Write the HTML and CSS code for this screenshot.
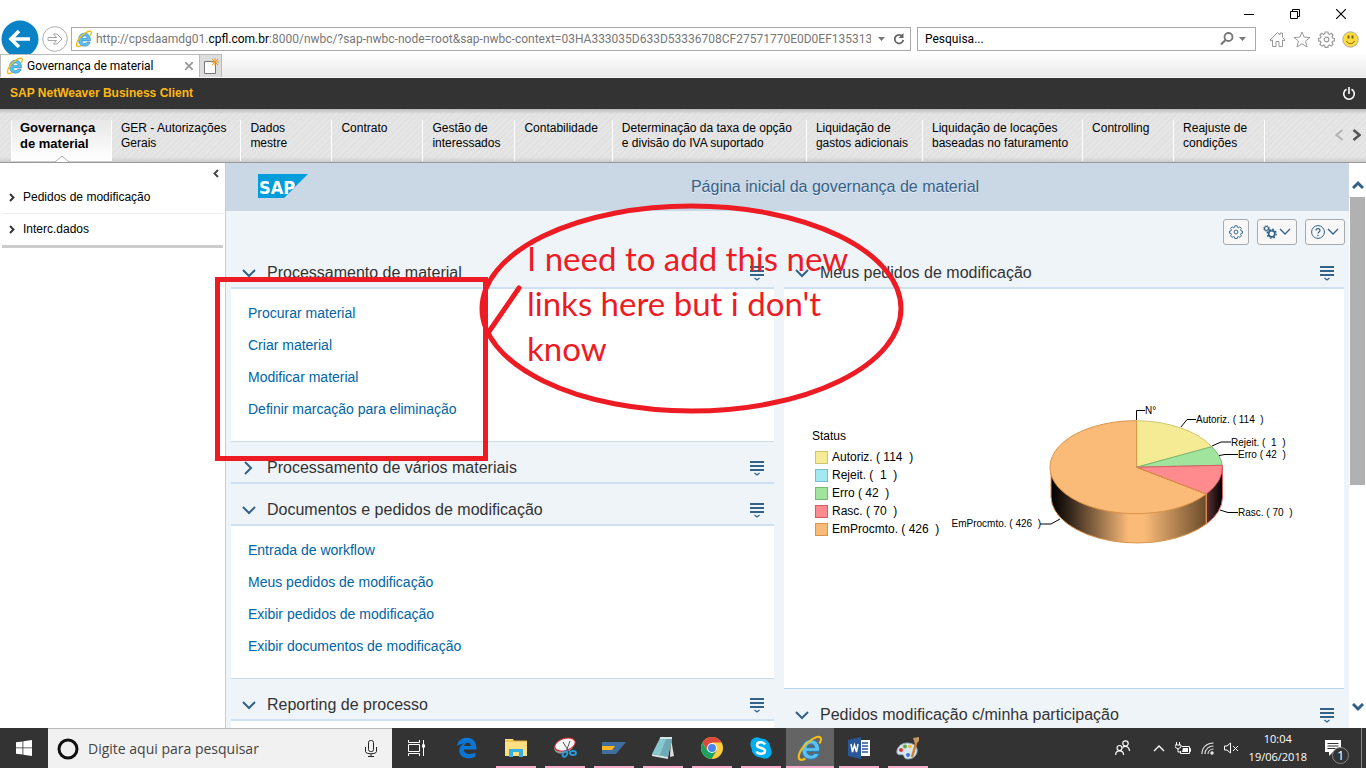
FILE: index.html
```html
<!DOCTYPE html>
<html lang="pt-BR">
<head>
<meta charset="utf-8">
<title>Governança de material</title>
<link rel="stylesheet" href="styles.css">
</head>
<body>
<svg class="defs" aria-hidden="true">
  <symbol id="ie" viewBox="0 0 24 24">
    <path d="M20.500 14.500H9.200c.3 2.300 1.700 3.500 3.700 3.500 1.500 0 2.500-.6 3-1.600h4.300c-1.100 3.300-3.800 5.100-7.400 5.100-5 0-8-3.300-8-8.500s3.200-8.700 8-8.700c5 0 8 3.500 7.700 10.200zM9.300 11.300h7c-.1-2-1.400-3.300-3.400-3.300s-3.300 1.300-3.600 3.300z" fill="#5bc2f0" stroke="#2379b5" stroke-width=".8"/>
    <path d="M20.500 7.500C23.500 2 21-.2 14.500 3.400 7.500 7.300 1.500 15.500 2 20.200c.3 2.500 3 2.400 6 .7" fill="none" stroke="#f4bd16" stroke-width="1.900"/>
  </symbol>
  <symbol id="menu" viewBox="0 0 14 15">
    <path d="M0 1h14M0 5h14M0 9h14" stroke="#346187" stroke-width="2"/>
    <path d="M4.500 12l2.500 2 2.500-2" fill="none" stroke="#346187" stroke-width="1.300"/>
  </symbol>
  <symbol id="down" viewBox="0 0 14 14"><path d="M1 4l6 6 6-6" fill="none" stroke="#346187" stroke-width="2"/></symbol>
  <symbol id="right" viewBox="0 0 14 14"><path d="M3 1l6 6-6 6" fill="none" stroke="#346187" stroke-width="2"/></symbol>
  <symbol id="thin-down" viewBox="0 0 12 8"><path d="M1 1l5 5 5-5" fill="none" stroke="#346187" stroke-width="1.300"/></symbol>
  <symbol id="item" viewBox="0 0 6 9"><path d="M1 1l3.500 3.500L1 8" fill="none" stroke="#333" stroke-width="1.900"/></symbol>
  <symbol id="gear" viewBox="0 0 18 18">
    <path d="M7.500 1h3l.4 2 1.400.6 1.700-1.200 2 2-1.200 1.700.6 1.400 2 .4v2.600l-2 .4-.6 1.400 1.200 1.700-2 2-1.700-1.200-1.400.6-.4 2h-3l-.4-2-1.400-.6L4 16l-2-2 1.200-1.700-.6-1.400-2-.4V7.900l2-.4.6-1.400L2 4.400l2-2 1.700 1.200L7.100 3z" fill="none" stroke="currentColor" stroke-width="1.200"/>
    <circle cx="9" cy="9" r="2.500" fill="none" stroke="currentColor" stroke-width="1.200"/>
  </symbol>
</svg>

<header class="chrome">
  <div class="window-controls">
    <button aria-label="Minimizar"><svg width="10" height="10"><path d="M0 5.500h10" stroke="#000"/></svg></button>
    <button aria-label="Restaurar"><svg width="10" height="10"><path d="M2.500 2.500V.5h7v7h-2M.5 2.500h7v7h-7z" fill="none" stroke="#000"/></svg></button>
    <button aria-label="Fechar"><svg width="10" height="10"><path d="M0 0l10 10M10 0L0 10" stroke="#000" stroke-width="1.200"/></svg></button>
  </div>
  <div class="address-row">
    <button class="back" aria-label="Voltar"><svg width="38" height="38" viewBox="0 0 38 38"><circle cx="19" cy="19" r="18.500" fill="#0983c5"/><path d="M29 19H12M18 11l-8 8 8 8" fill="none" stroke="#fff" stroke-width="3.600"/></svg></button>
    <button class="forward" aria-label="Avançar"><svg width="26" height="26" viewBox="0 0 26 26"><circle cx="13" cy="13" r="12.300" fill="none" stroke="#b0b0b0"/><path d="M6 11.500h8.500L11.500 8h3.500l5 5-5 5h-3.500l3-3.500H6z" fill="none" stroke="#a5a5a5"/></svg></button>
    <div class="field url">
      <svg width="18" height="18"><use href="#ie"/></svg>
      <div class="url-text" role="textbox" aria-label="Endereço">http://cpsdaamdg01.<b>cpfl.com.br</b>:8000/nwbc/?sap-nwbc-node=root&amp;sap-nwbc-context=03HA333035D633D53336708CF27571770E0D0EF135313036F1</div>
      <svg width="7" height="4"><path d="M0 0h7L3.500 4z" fill="#777"/></svg>
      <svg class="reload" width="12" height="12" viewBox="0 0 12 12"><path d="M9.500 3.500A4.300 4.300 0 1 0 10.300 7" fill="none" stroke="#666" stroke-width="1.800"/><path d="M10.500 0v5H5.500z" fill="#666"/></svg>
    </div>
    <div class="field search">
      <input type="text" value="Pesquisa..." aria-label="Pesquisa">
      <svg width="14" height="14" viewBox="0 0 14 14"><circle cx="8.500" cy="5" r="4" fill="none" stroke="#777" stroke-width="1.800"/><path d="M5.500 8L1 12.500" stroke="#777" stroke-width="2.200"/></svg>
      <svg width="7" height="4"><path d="M0 0h7L3.500 4z" fill="#777"/></svg>
    </div>
    <div class="tools">
      <svg width="17" height="17" viewBox="0 0 17 17"><path d="M1 9l7.500-7.500L11 4V2h2.500v4.500L16 9l-1 1-1.500-1v6.500h-3.500v-5H7v5H3.500V9L2 10z" fill="none" stroke="#999"/></svg>
      <svg width="18" height="17" viewBox="0 0 18 17"><path d="M9 1l2.200 5.200 5.800.3-4.500 3.600L14 16l-5-3.300L4 16l1.500-5.900L1 6.500l5.800-.3z" fill="none" stroke="#999"/></svg>
      <svg width="17" height="17" color="#999"><use href="#gear"/></svg>
      <svg width="17" height="17" viewBox="0 0 17 17"><circle cx="8.500" cy="8.500" r="7.700" fill="#ffdc3c" stroke="#aaa"/><path d="M6.500 4.500v3M10.500 4.500v3" stroke="#75621a" stroke-width="2"/><path d="M4.500 10c1.500 3.500 6.500 3.500 8 0" fill="none" stroke="#75621a"/></svg>
    </div>
  </div>
  <div class="tab-row">
    <div class="tab"><svg width="18" height="18"><use href="#ie"/></svg><span>Governança de material</span><button aria-label="Fechar guia"><svg width="8" height="8"><path d="M0 0l8 8M8 0L0 8" stroke="#999" stroke-width="1.800"/></svg></button></div>
    <button class="new-tab" aria-label="Nova guia"><svg width="16" height="17" viewBox="0 0 16 17"><path d="M1.500 3.500h11v12h-11z" fill="#fff" stroke="#777"/><path d="M12 0v8M8 4h8M9 1l6 6M15 1L9 7" stroke="#e89a20"/></svg></button>
  </div>
</header>

<div class="brand"><span>SAP NetWeaver Business Client</span>
  <button aria-label="Sair"><svg width="14" height="14" viewBox="0 0 14 14"><path d="M4.500 2.300a5.300 5.300 0 1 0 5 0M7 0v7" fill="none" stroke="#fff" stroke-width="1.600"/></svg></button>
</div>

<nav class="topnav">
  <a href="#" class="active">Governança<br>de material<svg class="pointer" width="14" height="7"><path d="M0 7l7-6 7 6" fill="#fff" stroke="#aaa"/></svg></a>
  <a href="#">GER - Autorizações<br>Gerais</a>
  <a href="#">Dados<br>mestre</a>
  <a href="#">Contrato</a>
  <a href="#">Gestão de<br>interessados</a>
  <a href="#">Contabilidade</a>
  <a href="#">Determinação da taxa de opção<br>e divisão do IVA suportado</a>
  <a href="#">Liquidação de<br>gastos adicionais</a>
  <a href="#">Liquidação de locações<br>baseadas no faturamento</a>
  <a href="#">Controlling</a>
  <a href="#">Reajuste de<br>condições</a>
  <div class="nav-arrows">
    <button aria-label="Anterior"><svg width="9" height="12"><path d="M7.500 1l-6 5 6 5" fill="none" stroke="#b5b5b5" stroke-width="2.200"/></svg></button>
    <button aria-label="Próximo"><svg width="9" height="12"><path d="M1.500 1l6 5-6 5" fill="none" stroke="#555" stroke-width="2.600"/></svg></button>
  </div>
</nav>

<main class="main">
  <aside class="sidebar">
    <button class="collapse" aria-label="Recolher"><svg width="6" height="9"><path d="M5 1L1.500 4.500 5 8" fill="none" stroke="#444" stroke-width="1.900"/></svg></button>
    <a href="#"><svg width="6" height="9"><use href="#item"/></svg>Pedidos de modificação</a>
    <a href="#"><svg width="6" height="9"><use href="#item"/></svg>Interc.dados</a>
  </aside>

  <div class="content">
    <div class="page-head">
      <svg width="50" height="25" viewBox="0 0 50 25" role="img" aria-label="SAP"><path d="M0 0h50L26 24H0z" fill="#009ddc"/><text class="logo-text" x="1" y="20">SAP</text></svg>
      <h1>Página inicial da governança de material</h1>
    </div>
    <div class="toolbar">
      <button aria-label="Configurações"><svg width="14" height="14" color="#346187"><use href="#gear"/></svg></button>
      <button aria-label="Serviços"><svg width="14" height="14" viewBox="0 0 14 14"><circle cx="3.500" cy="3.500" r="2" fill="none" stroke="#346187" stroke-width="1.200"/><circle cx="3.500" cy="3.500" r="2.900" fill="none" stroke="#346187" stroke-dasharray="1 1.280"/><circle cx="8.700" cy="8.700" r="3.100" fill="none" stroke="#346187" stroke-width="1.700"/><circle cx="8.700" cy="8.700" r="4.500" fill="none" stroke="#346187" stroke-width="1.400" stroke-dasharray="1.700 1.830"/></svg><svg width="12" height="8"><use href="#thin-down"/></svg></button>
      <button aria-label="Ajuda"><svg width="14" height="14" viewBox="0 0 14 14"><circle cx="7" cy="7" r="6.400" fill="none" stroke="#346187"/><path d="M5 5.500c0-2.700 4-2.500 4 0C9 7 7 6.900 7 8.600M7 9.700v1.500" fill="none" stroke="#346187" stroke-width="1.200"/></svg><svg width="12" height="8"><use href="#thin-down"/></svg></button>
    </div>

    <div class="columns">
      <div class="column">
        <section>
          <h2 class="head"><svg width="14" height="14"><use href="#down"/></svg><span>Processamento de material</span><svg width="14" height="15"><use href="#menu"/></svg></h2>
          <div class="links">
            <a href="#">Procurar material</a><a href="#">Criar material</a><a href="#">Modificar material</a><a href="#">Definir marcação para eliminação</a>
          </div>
        </section>
        <section>
          <h2 class="head"><svg width="14" height="14"><use href="#right"/></svg><span>Processamento de vários materiais</span><svg width="14" height="15"><use href="#menu"/></svg></h2>
        </section>
        <section>
          <h2 class="head"><svg width="14" height="14"><use href="#down"/></svg><span>Documentos e pedidos de modificação</span><svg width="14" height="15"><use href="#menu"/></svg></h2>
          <div class="links">
            <a href="#">Entrada de workflow</a><a href="#">Meus pedidos de modificação</a><a href="#">Exibir pedidos de modificação</a><a href="#">Exibir documentos de modificação</a>
          </div>
        </section>
        <section>
          <h2 class="head"><svg width="14" height="14"><use href="#down"/></svg><span>Reporting de processo</span><svg width="14" height="15"><use href="#menu"/></svg></h2>
          <div class="links"></div>
        </section>
      </div>

      <div class="column">
        <section>
          <h2 class="head"><svg width="14" height="14"><use href="#down"/></svg><span>Meus pedidos de modificação</span><svg width="14" height="15"><use href="#menu"/></svg></h2>
          <div class="chart">
            <div class="legend">
              <p>Status</p>
              <ul>
                <li class="autoriz">Autoriz. ( 114  )</li>
                <li class="rejeit">Rejeit. (  1  )</li>
                <li class="erro">Erro ( 42  )</li>
                <li class="rasc">Rasc. ( 70  )</li>
                <li class="emproc">EmProcmto. ( 426  )</li>
              </ul>
            </div>
            <svg class="pie" width="400" height="170" viewBox="0 0 400 170" role="img" aria-label="Pedidos por status">
              <defs>
                <linearGradient id="side"><stop offset="0" stop-color="#000"/><stop offset=".12" stop-color="#33251a"/><stop offset=".5" stop-color="#fabb78"/><stop offset=".6" stop-color="#fabb78"/><stop offset="1" stop-color="#6b4b2b"/></linearGradient>
                <linearGradient id="side-red"><stop offset="0" stop-color="#5d3335"/><stop offset="1" stop-color="#000"/></linearGradient>
              </defs>
              <path d="M107 78v30A86 46.500 0 0 0 262.300 135V105z" fill="url(#side)" stroke="#d9944b"/>
              <path d="M262.300 105v30A86 46.500 0 0 0 278.500 108V77z" fill="url(#side-red)" stroke="#d85c62"/>
              <path d="M192.600 78.200V31.700A86 46.500 0 1 0 262.300 105z" fill="#fabb78" stroke="#d9944b"/>
              <path d="M192.600 78.200V31.700A86 46.500 0 0 1 267.700 57.700z" fill="#f4eb94" stroke="#cfc66c"/>
              <path d="M192.600 78.200L267.700 57.700A86 46.500 0 0 1 278.300 76.300z" fill="#a1e49d" stroke="#77b873"/>
              <path d="M192.600 78.200L278.300 76.300A86 46.500 0 0 1 262.300 105z" fill="#ff8b8e" stroke="#d85c62"/>
              <path d="M192.600 31.700V78.200L262.300 105v30" fill="none" stroke="#d9944b"/>
              <path d="M192.500 31V21.500H201M237 38l6-7.500h9M268 57l9-4h10M275 66.500l6-1h13M276 121l8 2.500h10M116 130l-9 5H96" fill="none" stroke="#000"/>
              <text x="201" y="25">N°</text>
              <text x="252" y="34">Autoriz. ( 114  )</text>
              <text x="287" y="57">Rejeit. (  1  )</text>
              <text x="294" y="69">Erro ( 42  )</text>
              <text x="294" y="127">Rasc. ( 70  )</text>
              <text x="97" y="138" text-anchor="end">EmProcmto. ( 426  )</text>
            </svg>
          </div>
        </section>
        <section>
          <h2 class="head"><svg width="14" height="14"><use href="#down"/></svg><span>Pedidos modificação c/minha participação</span><svg width="14" height="15"><use href="#menu"/></svg></h2>
        </section>
      </div>
    </div>
  </div>

  <div class="scrollbar">
    <button aria-label="Rolar para cima"><svg width="12" height="9"><path d="M1 8l5-5 5 5" fill="none" stroke="#346187" stroke-width="3"/></svg></button>
    <div class="thumb"></div>
    <button class="scroll-down" aria-label="Rolar para baixo"><svg width="12" height="9"><path d="M1 1l5 5 5-5" fill="none" stroke="#346187" stroke-width="3"/></svg></button>
  </div>

  <div class="note">
    <svg width="700" height="265" viewBox="0 0 700 265" fill="none" stroke="#ed1c24" stroke-width="5">
      <path d="M7.500 82.500h268v179h-268z"/>
      <ellipse cx="481.500" cy="111.500" rx="209.500" ry="102.500"/>
      <path d="M309 91l-31 45" stroke-linecap="round"/>
    </svg>
    <p>I need to add this new<br>links here but i don't<br>know</p>
  </div>
</main>

<footer class="taskbar">
  <button class="start" aria-label="Iniciar"><svg width="16" height="16" viewBox="0 0 16 16" fill="#fff"><path d="M0 2.300L6.500 1.400V7.500H0zM7.300 1.300L16 0v7.500H7.300zM0 8.300h6.500v6.200L0 13.700zM7.300 8.300H16V16l-8.700-1.300z"/></svg></button>
  <div class="task-search">
    <svg width="22" height="22"><circle cx="11" cy="11" r="9" fill="none" stroke="#111" stroke-width="3"/></svg>
    <input type="text" value="Digite aqui para pesquisar" aria-label="Digite aqui para pesquisar">
    <svg width="12" height="17" viewBox="0 0 12 17"><rect x="3.500" y=".5" width="5" height="11" rx="2" fill="none" stroke="#222"/><path d="M.5 7v4.500c0 3 11 3 11 0V7M6 14v2.500M3 16.500h6" fill="none" stroke="#222"/></svg>
  </div>
  <div class="apps">
    <button class="plain" aria-label="Visão de tarefas"><svg width="18" height="16" viewBox="0 0 18 16" fill="none" stroke="#fff"><path d="M.5 4.500h11v7H.5zM.5 0v2.500h11V0M.5 16v-2.500h11V16M15.500 0v16"/><path d="M14 6h3" stroke-width="3"/></svg></button>
    <button class="plain" aria-label="Edge"><svg width="22" height="22" viewBox="0 0 22 22"><path d="M1 9.500C2 3 6 .8 11 .8c6.500 0 9.600 4.700 9.500 11.700H7.700c.2 5 7.300 5.500 11.800 3v4C13.500 23 3.300 21.500 3.300 13.500c0-3 1.700-5.600 4.700-7-3 .4-5.500 1.200-7 3zM8 9h7c0-4.500-6-4.500-7 0z" fill="#0b77d5"/></svg></button>
    <button aria-label="Explorador"><svg width="22" height="20" viewBox="0 0 22 20"><path d="M0 1h8l1 2h13v15H0z" fill="#ffdf80"/><path d="M0 3h22" stroke="#e0a83c"/><path d="M4 11h14v8h-4v-5H8v5H4z" fill="#35b2e5"/></svg></button>
    <button aria-label="Captura"><svg width="24" height="22" viewBox="0 0 24 22"><ellipse cx="11" cy="10" rx="10" ry="6" transform="rotate(-18 11 10)" fill="#999"/><ellipse cx="12" cy="7.500" rx="10.500" ry="6" transform="rotate(-18 12 7.500)" fill="#fafafa" stroke="#d22832"/><path d="M10 5l6 10M17 4l-4 11" stroke="#555"/><ellipse cx="12" cy="17" rx="2" ry="3" transform="rotate(30 12 17)" fill="none" stroke="#299be0" stroke-width="1.800"/><ellipse cx="20" cy="16" rx="3" ry="2" fill="none" stroke="#299be0" stroke-width="1.800"/></svg></button>
    <button aria-label="SAP Logon"><svg width="24" height="12" viewBox="0 0 24 12"><path d="M0 0h24L14 12H0z" fill="#3f6f9f"/><path d="M0 4h13l-3 4H0z" fill="#ffb520"/></svg></button>
    <button aria-label="Bloco de notas"><svg width="22" height="22" viewBox="0 0 22 22"><path d="M19 2l3 17-4 1z" fill="#ddd"/><path d="M8 1h12l-4 19L0 17z" fill="#89c7d0"/><path d="M14 2h6l-4 18-8-2z" fill="#6fa9b4"/><path d="M8 1h12M0 18l16 3" stroke="#d4e6e5" stroke-width="2"/></svg></button>
    <button aria-label="Chrome"><svg width="22" height="22" viewBox="0 0 22 22"><circle cx="11" cy="11" r="11" fill="#ffcd40"/><path d="M1.500 5.500A11 11 0 0 1 20.500 5.500H11l-4.500 8z" fill="#df493d"/><path d="M1.500 5.500A11 11 0 0 0 10.500 22L15.700 13.500 6.300 13.500z" fill="#1ba261"/><circle cx="11" cy="11" r="5" fill="#fff"/><circle cx="11" cy="11" r="4" fill="#4784ee"/></svg></button>
    <button aria-label="Skype"><svg width="22" height="22" viewBox="0 0 22 22"><circle cx="7" cy="7" r="6.700" fill="#00aff0"/><circle cx="15" cy="15" r="6.700" fill="#00aff0"/><circle cx="11" cy="11" r="9.500" fill="#00aff0"/><path d="M15 7.500C13.500 4.500 7 4.600 7 8c0 4 8 2 8 6 0 3.500-7 3.600-8.500.5" fill="none" stroke="#fff" stroke-width="2.500"/></svg></button>
    <button class="current" aria-label="Internet Explorer"><svg width="28" height="27"><use href="#ie"/></svg></button>
    <button aria-label="Word"><svg width="22" height="22" viewBox="0 0 22 22"><path d="M12 3h10v16H12z" fill="#fff"/><path d="M14 6h6M14 9h6M14 12h6M14 15h6" stroke="#2a579a" stroke-width="1.300"/><path d="M0 3l13-3v22L0 19z" fill="#2a579a"/><path d="M3 7l1.500 8 2-7 2 7L10 7" fill="none" stroke="#fff" stroke-width="1.500"/></svg></button>
    <button aria-label="Paint"><svg width="24" height="23" viewBox="0 0 24 23"><path d="M11 6C4 6 0 12 1 16c1 3 4 1 6 2s0 4 5 4c6 0 10-5 9-10-1-4-5-6-10-6z" fill="#d9e6f0" stroke="#8ba2b5"/><circle cx="5" cy="13" r="2" fill="#d83a32"/><circle cx="9" cy="9.500" r="2" fill="#5baa40"/><circle cx="14" cy="9.500" r="1.800" fill="#e9b937"/><circle cx="12" cy="18" r="2" fill="#3c79c9"/><path d="M21 3l-5 17" stroke="#d08034" stroke-width="2.500"/><path d="M17 1l6-1v4l-4 3z" fill="#c89864"/></svg></button>
  </div>
  <div class="tray">
    <svg width="15" height="16" viewBox="0 0 15 16" fill="none" stroke="#fff" stroke-width="1.200"><circle cx="10.500" cy="3.500" r="2.700"/><circle cx="4.500" cy="8" r="2.500"/><path d="M.6 15c0-5.500 8-5.500 8 0M7.500 7.500c3-2.500 7-.5 7 3.500"/></svg>
    <svg class="up" width="12" height="8"><path d="M1 7l5-5 5 5" fill="none" stroke="#fff" stroke-width="1.400"/></svg>
    <svg width="16" height="13" viewBox="0 0 16 13"><path d="M7 4.500h7.500v7h-9V9M14.500 6.500h1v3h-1" fill="none" stroke="#fff"/><path d="M8 6h5v4H7z" fill="#fff"/><path d="M1.500 0v3M4.500 0v3M0 3h6v2L3 7 0 5zM3 7v3h3" fill="none" stroke="#fff"/></svg>
    <svg width="13" height="13" viewBox="0 0 13 13" fill="none" stroke="#ddd" stroke-width="1.200"><path d="M1 12C1 5 6 1 12.500 1M4 12c0-5 4-8 8.500-8M7 12c0-3 2.500-5 5.500-5"/><circle cx="11" cy="11" r="1.200" fill="#fff"/></svg>
    <svg width="15" height="12" viewBox="0 0 15 12" fill="none" stroke="#fff"><path d="M.5 4h2.500l3.500-3v10L3 8H.5zM9 4l5 5M14 4L9 9"/></svg>
    <div class="clock"><span>10:04</span><span>19/06/2018</span></div>
    <button class="alerts" aria-label="Notificações"><svg width="24" height="24" viewBox="0 0 24 24"><path d="M0 0h16v12H8l-4 4v-4H0z" fill="#fff"/><path d="M2.500 3.500h11M2.500 6h11M2.500 8.500h8" stroke="#333"/><circle cx="15.500" cy="15.500" r="8" fill="#333" stroke="#888"/><text class="count" x="12" y="20">1</text></svg></button>
  </div>
</footer>
</body>
</html>
```
FILE: styles.css
```css
* { box-sizing: border-box; }
body {
  margin: 0;
  height: 100vh;
  display: flex;
  flex-direction: column;
  overflow: hidden;
  background: #fff;
  color: #000;
  font: 12px/15px "Liberation Sans", Arial, sans-serif;
}
button { padding: 0; border: 0; background: none; font: inherit; display: flex; align-items: center; justify-content: center; }
a { text-decoration: none; color: inherit; }
h1, h2, p, ul { margin: 0; padding: 0; font-weight: normal; }
svg { flex: none; display: block; }
input { border: 0; padding: 0; background: none; min-width: 0; flex: 1; outline: none; color: inherit; font: inherit; }
.defs { width: 0; height: 0; position: absolute; }

/* Browser window */
.chrome { flex: none; font-family: Roboto, "Open Sans", sans-serif; }
.window-controls { height: 24px; padding: 9px 20px 0 0; display: flex; justify-content: flex-end; align-items: flex-start; gap: 36px; }
.address-row { height: 30px; display: flex; align-items: center; padding-left: 1px; }
.back { width: 38px; height: 38px; }
.forward { width: 26px; height: 26px; margin: 0 3px; }
.field { height: 24px; display: flex; align-items: center; border: 1px solid #aaa; background: #fff; }
.url { flex: 1; padding: 0 5px 0 3px; gap: 7px; color: #777; }
.url-text { flex: 1; width: 0; overflow: hidden; white-space: nowrap; margin-left: -4px; }
.url-text b { font-weight: normal; color: #000; }
.url .reload { margin-left: 1px; }
.search { width: 339px; margin-left: 6px; padding: 0 9px 0 7px; gap: 5px; }
.tools { display: flex; gap: 7px; padding: 0 7px 0 13px; }
.tab-row { position: relative; height: 24px; display: flex; background: linear-gradient(#fdfdfd, #eaeaea); border-bottom: 1px solid #f5f5f5; }
.tab { width: 200px; display: flex; align-items: center; gap: 3px; padding: 0 6px 0 5px; background: #fff; border: 1px solid #bbb; border-bottom: 0; }
.tab span { flex: 1; white-space: nowrap; }
.new-tab { width: 22px; background: #ddd; border: 1px solid #bbb; border-left: 0; border-bottom: 0; }

/* Application header */
.brand { flex: none; height: 31px; background: #333; color: #fdb813; display: flex; align-items: center; justify-content: space-between; padding: 0 10px; font-weight: bold; }
.brand button { width: 14px; }
.topnav {
  flex: none; height: 54px; padding: 11px 9px 0 11px; display: flex; border-bottom: 1px solid #999;
  background: linear-gradient(#bbb, transparent 5px, transparent 48px, #ccc), repeating-linear-gradient(135deg, #e6e6e6 0 2px, #e1e1e1 2px 4px);
}
.topnav a { position: relative; border-left: 1px solid #fff; padding: 1px 14px 0 9px; min-width: 91px; white-space: nowrap; margin-bottom: 1px; }
.topnav .active { width: 100px; font-size: 13px; line-height: 16px; font-weight: bold; background: linear-gradient(#e8e8e8, #fff); padding: 0 8px; }
.pointer { position: absolute; bottom: -1px; left: 43px; }
.nav-arrows { flex: 1; display: flex; justify-content: flex-end; gap: 8px; border-left: 1px solid #fff; padding-bottom: 12px; margin-right: -4px; }

/* Working area */
.main { flex: 1; min-height: 0; display: flex; position: relative; overflow: hidden; }
.sidebar { width: 226px; flex: none; border-right: 1px solid #ccc; padding: 0 2px; }
.collapse { margin-left: auto; width: 14px; height: 19px; padding-top: 1px; }
.sidebar a { display: flex; align-items: center; gap: 8px; height: 32px; padding-left: 7px; border-bottom: 1px solid #eee; }
.sidebar a:last-child { height: 34px; border-bottom: 3px solid #ccc; }
.content { flex: 1; min-width: 0; background: #eff4f9; overflow: hidden; }
.page-head { height: 48px; background: #cad8e6; display: flex; align-items: center; gap: 13px; padding: 0 0 1px 32px; color: #346187; }
.logo-text { font: bold 22px "Liberation Sans Narrow", "DejaVu Sans Condensed", sans-serif; font-size: 18px; fill: #fff; }
.page-head h1 { flex: 1; text-align: center; font-size: 16px; line-height: 20px; text-shadow: 0 1px #e4ecf4; }
.toolbar { height: 36px; display: flex; justify-content: flex-end; gap: 8px; padding: 8px 4px 0 0; }
.toolbar button { height: 26px; min-width: 26px; padding: 0 5px; gap: 2px; border: 1px solid #aaa; border-radius: 3px; background: #f7f7f7; }
.columns { display: grid; grid-template-columns: 543fr 560fr; gap: 10px; padding: 0 5px; }
.head { height: 42px; display: flex; align-items: center; gap: 11px; padding: 12px 10px 0 11px; border-bottom: 2px solid #cfe0f0; color: #333; font-size: 16px; line-height: 20px; }
.head span { flex: 1; white-space: nowrap; }
.links { min-height: 40px; padding: 8px 17px 16px; background: #fff; border-bottom: 1px solid #cbdce8; color: #0064a6; font-size: 14px; line-height: 32px; }
.links a { display: table; }
.chart { height: 400px; padding: 100px 0 0 28px; display: flex; background: #fff; border-bottom: 1px solid #bdd5ea; }
.legend { flex: none; width: 132px; padding-top: 40px; }
.legend ul { list-style: none; padding: 4px 0 0 3px; line-height: 18px; }
.legend li { display: flex; align-items: center; gap: 4px; white-space: pre; }
.legend li::before { content: ""; width: 11px; height: 11px; background: #f4eb94; border: 1px solid #cfc66c; }
.legend .rejeit::before { background: #a2e9f3; border-color: #76bfca; }
.legend .erro::before { background: #a1e49d; border-color: #77b873; }
.legend .rasc::before { background: #ff8b8e; border-color: #d85c62; }
.legend .emproc::before { background: #fabb78; border-color: #d9944b; }
.pie text { font: 10px "Liberation Sans", sans-serif; white-space: pre; }
.scrollbar { flex: none; width: 17px; background: #fff; padding: 0 1px; display: flex; flex-direction: column; }
.scrollbar button { height: 34px; padding-top: 8px; }
.thumb { height: 51%; background: #b1b1b1; }
.scrollbar .scroll-down { margin-top: auto; padding: 0 0 8px; }

/* Callout drawn over the page */
.note { position: absolute; left: 210px; top: 34px; color: #ed1c24; pointer-events: none; }
.note p { position: absolute; left: 317px; top: 39px; white-space: nowrap; font: 33px/45px Lato, "Open Sans", sans-serif; }

/* Taskbar */
.taskbar { flex: none; height: 40px; display: flex; background: #333; color: #fff; font-family: "Open Sans", "Noto Sans", sans-serif; }
.start { width: 48px; }
.task-search { width: 344px; padding: 0 15px 0 9px; display: flex; align-items: center; gap: 9px; background: #f1f1f1; border-top: 1px solid #bbb; color: #444; font-size: 14px; line-height: 24px; }
.task-search input { height: 24px; }
.apps { display: flex; gap: 1px; }
.apps button { width: 48px; position: relative; }
.apps .plain:first-child { width: 50px; }
.apps button::after { content: ""; position: absolute; bottom: 0; left: 4px; right: 4px; height: 2px; background: #f8aecb; }
.apps .plain::after { display: none; }
.apps .current { background: #646464; }
.apps .current::after { left: 0; right: 0; }
.tray { margin-left: auto; display: flex; align-items: center; gap: 10px; padding-right: 4px; }
.tray .up { margin: 0 0 0 13px; }
.clock { display: flex; flex-direction: column; align-items: center; line-height: 18px; font-size: 11px; }
.alerts { height: 40px; padding: 7px 12px 0 8px; border-right: 1px solid #888; }
.count { font: 13px "Open Sans", sans-serif; fill: #fff; }
```
